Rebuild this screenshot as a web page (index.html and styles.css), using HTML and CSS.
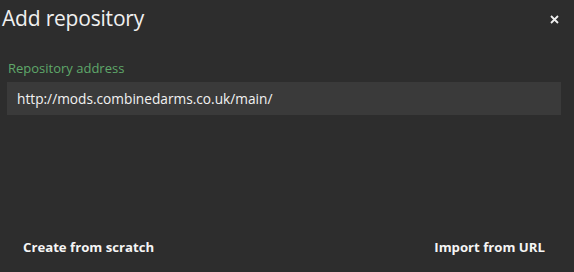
FILE: index.html
```html
<!DOCTYPE html>
<html>
<head>
<meta charset="utf-8">
<link rel="stylesheet" href="styles.css">
</head>
<body>
<div class="dialog">
  <div class="header">
    <h1 class="title">Add repository</h1>
    <button class="close" aria-label="Close">
      <svg width="9" height="9" viewBox="0 0 9 9"><path d="M1 1L8 8M8 1L1 8" stroke="#f0f0f0" stroke-width="1.8" fill="none"/></svg>
    </button>
  </div>
  <div class="body">
    <label class="label">Repository address</label>
    <div class="input">http://mods.combinedarms.co.uk/main/</div>
  </div>
  <div class="footer">
    <button class="btn">Create from scratch</button>
    <button class="btn">Import from URL</button>
  </div>
</div>
</body>
</html>
```
FILE: styles.css
```css
html, body {
  margin: 0;
  padding: 0;
  background: #2d2d2d;
  width: 574px;
  height: 272px;
  overflow: hidden;
}
.dialog {
  width: 574px;
  height: 272px;
  display: flex;
  flex-direction: column;
  font-family: "Open Sans", "Noto Sans", sans-serif;
  color: #f0f0f0;
}
.header {
  display: flex;
  align-items: center;
  justify-content: space-between;
  height: 37px;
  padding: 0 15px 0 2px;
}
.title {
  margin: 0;
  font-weight: 400;
  font-size: 21px;
  letter-spacing: -0.2px;
  line-height: 37px;
}
.close {
  background: none;
  border: 0;
  padding: 0;
  width: 9px;
  height: 9px;
  display: flex;
  margin-top: 1px;
}
.body {
  padding: 22px 13px 0 7px;
  display: flex;
  flex-direction: column;
}
.label {
  color: #5fa86a;
  font-size: 13px;
  line-height: 18px;
  padding-left: 1px;
  margin-bottom: 5px;
}
.input {
  background: #3a3a3a;
  height: 33px;
  line-height: 33px;
  padding-left: 10px;
  font-size: 13.7px;
  color: #f2f2f2;
}
.footer {
  margin-top: auto;
  display: flex;
  justify-content: space-between;
  padding: 0 29px 16px 23px;
}
.btn {
  background: none;
  border: 0;
  padding: 0;
  color: #f5f5f5;
  font-family: "Open Sans", "Noto Sans", sans-serif;
  font-weight: 700;
  font-size: 13.2px;
  line-height: 18px;
}
```
